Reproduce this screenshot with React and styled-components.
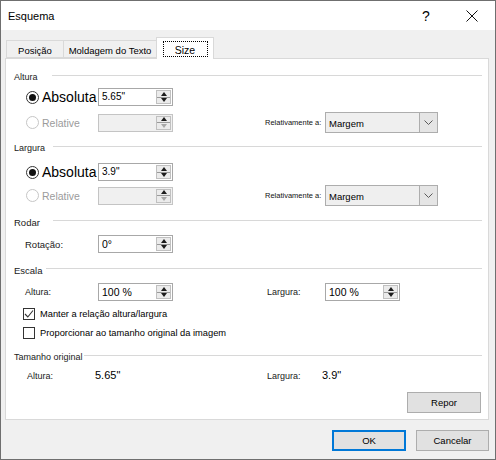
import React from 'react'
import styled, { createGlobalStyle } from 'styled-components'

const Global = createGlobalStyle`
  html, body { margin: 0; padding: 0; background: #f0f0f0; }
  body { font-family: "Liberation Sans", Arial, sans-serif; color: #000; }
  * { box-sizing: border-box; }
`

const Window = styled.div`
  width: 496px;
  height: 460px;
  border: 1px solid #6f6f6f;
  background: #f0f0f0;
  display: flex;
  flex-direction: column;
`

const TitleBar = styled.div`
  height: 29px;
  background: #fff;
  display: flex;
  align-items: center;
  padding-left: 7px;
`

const Title = styled.div`
  flex: 1;
  font-size: 11px;
`

const CaptionButton = styled.div`
  width: 46px;
  height: 29px;
  display: flex;
  align-items: center;
  justify-content: center;
  font-size: 14px;
`

const Frame = styled.div`
  flex: 1;
  display: flex;
  flex-direction: column;
  padding: 7px 6px 0 4px;
`

const TabRow = styled.div`
  display: flex;
  align-items: flex-end;
  height: 21px;
  padding-left: 1px;
  position: relative;
  z-index: 1;
`

const Tab = styled.div`
  height: ${p => (p.$active ? 22 : 18)}px;
  margin-bottom: ${p => (p.$active ? -1 : 0)}px;
  width: ${p => p.$w}px;
  margin-left: -1px;
  &:first-child { margin-left: 0; }
  border: 1px solid #d9d9d9;
  border-bottom: ${p => (p.$active ? 'none' : '1px solid #d9d9d9')};
  background: ${p => (p.$active ? '#fff' : '#f0f0f0')};
  display: flex;
  align-items: ${p => (p.$active ? 'flex-start' : 'center')};
  justify-content: center;
  padding-top: ${p => (p.$active ? 3 : 2)}px;
  font-size: ${p => (p.$active ? 10.5 : 9.5)}px;
`

const FocusRing = styled.div`
  width: 45px;
  height: 16px;
  border: 1px dotted #000;
  display: flex;
  align-items: center;
  justify-content: center;
  padding-top: 1px;
`

const Panel = styled.div`
  background: #fff;
  border: 1px solid #d9d9d9;
  display: flex;
  flex-direction: column;
  padding: 0 6px 6px 8px;
`

const GroupHead = styled.div`
  display: flex;
  height: 14px;
  margin-top: ${p => p.$mt}px;
  align-items: center;
  font-size: ${p => p.$size || 9}px;
  color: #1a1a1a;
`

const HeadLine = styled.div`
  flex: 1;
  height: 1px;
  align-self: flex-start;
  margin-top: 5px;
  margin-left: ${p => p.$gap}px;
  background: #d8d8d8;
`

const Row = styled.div`
  display: grid;
  grid-template-columns: 73px 167px 60px auto;
  align-items: center;
  padding-left: 11px;
  height: ${p => p.$h}px;
  margin-top: ${p => p.$mt}px;
`

const RadioLabel = styled.div`
  display: flex;
  align-items: center;
  white-space: nowrap;
  gap: 3px;
  margin-left: 1px;
  font-size: ${p => (p.$disabled ? 10.5 : 14)}px;
  color: ${p => (p.$disabled ? '#9b9b9b' : '#000')};
`

const RadioCircle = styled.span`
  width: 13px;
  height: 13px;
  border-radius: 50%;
  border: 1px solid ${p => (p.$disabled ? '#c6c6c6' : '#333')};
  display: flex;
  align-items: center;
  justify-content: center;
  &::after {
    content: '';
    display: ${p => (p.$checked ? 'block' : 'none')};
    width: 7px;
    height: 7px;
    border-radius: 50%;
    background: #111;
  }
`

const FieldLabel = styled.div`
  font-size: ${p => p.$size || 9}px;
  color: #1a1a1a;
  white-space: nowrap;
  padding-left: ${p => p.$indent || 0}px;
`

const SpinField = styled.div`
  width: 75px;
  height: 18px;
  display: flex;
  border: 1px solid ${p => (p.$disabled ? '#c4c4c4' : '#a8a8a8')};
  background: ${p => (p.$disabled ? '#f0f0f0' : '#fff')};
`

const SpinText = styled.div`
  flex: 1;
  padding-left: 3px;
  font-size: ${p => p.$size}px;
  line-height: 16px;
`

const SpinButtons = styled.div`
  width: 15px;
  margin: 1px 1px 1px 0;
  border: 1px solid #c0c0c0;
  background: #ebebeb;
  display: flex;
  flex-direction: column;
`

const SpinHalf = styled.div`
  flex: 1;
  display: flex;
  align-items: center;
  justify-content: center;
  & + & { border-top: 1px solid #9a9a9a; }
`

const Arrow = styled.span`
  width: 0;
  height: 0;
  border-left: 3.5px solid transparent;
  border-right: 3.5px solid transparent;
  ${p =>
    p.$up
      ? `border-bottom: 4px solid ${p.$faded ? '#a8a8a8' : '#1c1c1c'};`
      : `border-top: 4px solid ${p.$faded ? '#a8a8a8' : '#1c1c1c'};`}
`

const SmallLabel = styled.div`
  font-size: 7.5px;
  white-space: nowrap;
  color: #111;
`

const Select = styled.div`
  width: 113px;
  height: 21px;
  border: 1px solid #adadad;
  background: #efefef;
  display: flex;
`

const SelectText = styled.div`
  flex: 1;
  font-size: 9.5px;
  padding: 5px 0 0 3px;
`

const SelectArrow = styled.div`
  width: 18px;
  border-left: 1px solid #adadad;
  background: #e5e5e5;
  display: flex;
  align-items: center;
  justify-content: center;
`

const CheckRow = styled.div`
  display: flex;
  align-items: center;
  gap: 5px;
  padding-left: 9px;
  height: 14px;
  margin-top: ${p => p.$mt}px;
  font-size: 9.3px;
`

const CheckBox = styled.span`
  width: 12px;
  height: 12px;
  border: 1px solid #333;
  background: #fff;
  display: flex;
  align-items: center;
  justify-content: center;
`

const OrigValue = styled.div`
  font-size: 11px;
  margin-left: -3px;
  margin-top: -3px;
`

const Button = styled.div`
  width: ${p => p.$w || 74}px;
  height: 21px;
  background: #e1e1e1;
  border: ${p => (p.$default ? '2px solid #0078d7' : '1px solid #adadad')};
  display: flex;
  align-items: center;
  justify-content: center;
  font-size: 9.5px;
`

const ResetRow = styled.div`
  display: flex;
  justify-content: flex-end;
  margin-top: 9px;
  padding-right: 1px;
`

const Footer = styled.div`
  display: flex;
  justify-content: flex-end;
  gap: 10px;
  margin-top: 10px;
`

const Spinner = ({ value = '', disabled, size = 10.5 }) => (
  <SpinField $disabled={disabled}>
    <SpinText $size={size}>{value}</SpinText>
    <SpinButtons>
      <SpinHalf><Arrow $up /></SpinHalf>
      <SpinHalf><Arrow $faded={disabled} /></SpinHalf>
    </SpinButtons>
  </SpinField>
)

const Radio = ({ checked, disabled, children }) => (
  <RadioLabel $disabled={disabled}>
    <RadioCircle $checked={checked} $disabled={disabled} />
    {children}
  </RadioLabel>
)

const Dropdown = ({ value }) => (
  <Select>
    <SelectText>{value}</SelectText>
    <SelectArrow>
      <svg width="9" height="5" viewBox="0 0 9 5">
        <polyline points="0.5,0.5 4.5,4.5 8.5,0.5" fill="none" stroke="#5a5a5a" strokeWidth="1" />
      </svg>
    </SelectArrow>
  </Select>
)

const Check = ({ checked, children, mt }) => (
  <CheckRow $mt={mt}>
    <CheckBox>
      {checked && (
        <svg width="10" height="10" viewBox="0 0 10 10">
          <polyline points="1,5 3.8,8 9,1.5" fill="none" stroke="#333" strokeWidth="1.1" />
        </svg>
      )}
    </CheckBox>
    {children}
  </CheckRow>
)

// bloco Absoluta / Relative repetido para altura e largura
const SizeBlock = ({ title, value, headTop, gap, absTop, relTop }) => (
  <>
    <GroupHead $mt={headTop}>
      {title}
      <HeadLine $gap={gap} />
    </GroupHead>
    <Row $h={18} $mt={absTop}>
      <Radio checked>Absoluta</Radio>
      <Spinner value={value} size={10} />
    </Row>
    <Row $h={20} $mt={relTop}>
      <Radio disabled>Relative</Radio>
      <Spinner disabled />
      <SmallLabel>Relativamente a:</SmallLabel>
      <Dropdown value="Margem" />
    </Row>
  </>
)

export default function App() {
  return (
    <Window>
      <Global />
      <TitleBar>
        <Title>Esquema</Title>
        <CaptionButton>?</CaptionButton>
        <CaptionButton>
          <svg width="12" height="12" viewBox="0 0 12 12">
            <path d="M0.5 0.5 L11.5 11.5 M11.5 0.5 L0.5 11.5" stroke="#111" strokeWidth="1" />
          </svg>
        </CaptionButton>
      </TitleBar>
      <Frame>
        <TabRow>
          <Tab $w={58}>Posição</Tab>
          <Tab $w={94}>Moldagem do Texto</Tab>
          <Tab $w={58} $active>
            <FocusRing>Size</FocusRing>
          </Tab>
        </TabRow>
        <Panel>
          <SizeBlock title="Altura" value={'5.65"'} headTop={11} gap={14} absTop={4} relTop={6} />
          <SizeBlock title="Largura" value={'3.9"'} headTop={9} gap={8} absTop={8} relTop={4} />

          <GroupHead $mt={10} $size={9.5}>
            Rodar
            <HeadLine $gap={13} />
          </GroupHead>
          <Row $h={18} $mt={6}>
            <FieldLabel $size={9.5}>Rotação:</FieldLabel>
            <Spinner value="0°" />
          </Row>

          <GroupHead $mt={10} $size={9.5}>
            Escala
            <HeadLine $gap={3} />
          </GroupHead>
          <Row $h={18} $mt={6}>
            <FieldLabel>Altura:</FieldLabel>
            <Spinner value="100 %" />
            <FieldLabel $indent={2}>Largura:</FieldLabel>
            <Spinner value="100 %" />
          </Row>
          <Check checked mt={6}>Manter a relação altura/largura</Check>
          <Check mt={5}>Proporcionar ao tamanho original da imagem</Check>

          <GroupHead $mt={10}>
            Tamanho original
            <HeadLine $gap={1} />
          </GroupHead>
          <Row $h={14} $mt={5}>
            <FieldLabel $indent={2}>Altura:</FieldLabel>
            <OrigValue>5.65"</OrigValue>
            <FieldLabel $indent={2}>Largura:</FieldLabel>
            <OrigValue>3.9"</OrigValue>
          </Row>
          <ResetRow>
            <Button>Repor</Button>
          </ResetRow>
        </Panel>
        <Footer>
          <Button $default>OK</Button>
          <Button $w={73}>Cancelar</Button>
        </Footer>
      </Frame>
    </Window>
  )
}
